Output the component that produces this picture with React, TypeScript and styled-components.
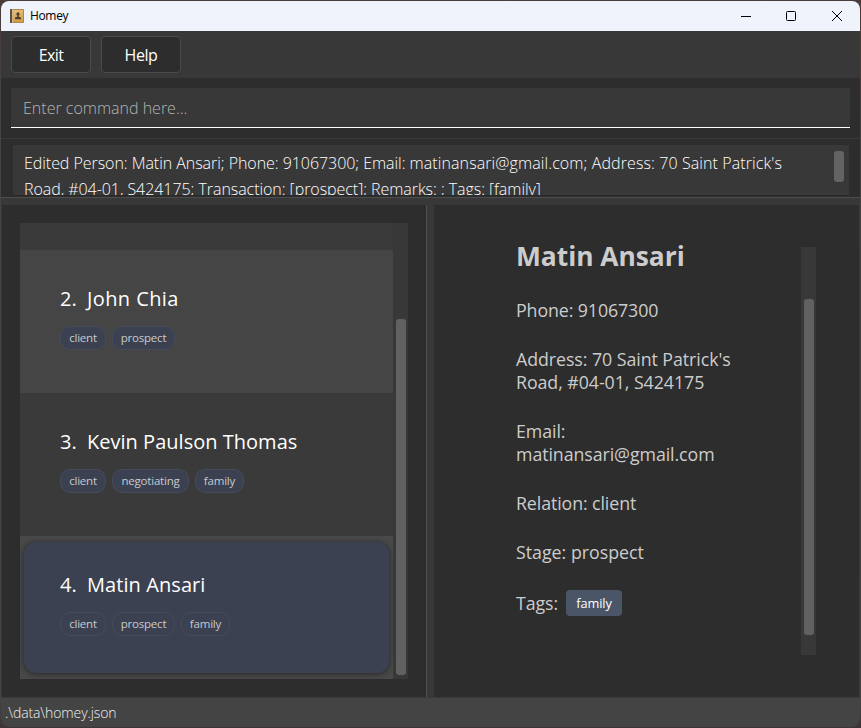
import React from "react";
import styled, { createGlobalStyle } from "styled-components";

const GlobalStyle = createGlobalStyle`
  * { box-sizing: border-box; }
  html, body { margin: 0; background: #3a3838; }
  body {
    font-family: "Open Sans", "Noto Sans", sans-serif;
    overflow: hidden;
  }
`;

const Desktop = styled.div`
  width: 861px;
  height: 728px;
  padding: 1px;
  background: linear-gradient(180deg, #4a3c38 0, #454343 120px, #444444 700px, #3c3436 100%);
`;

const Window = styled.div`
  width: 859px;
  height: 726px;
  display: flex;
  flex-direction: column;
  background: #2d2d2d;
  border-radius: 8px;
  overflow: hidden;
`;

const TitleBar = styled.header`
  flex: 0 0 30px;
  display: flex;
  align-items: center;
  padding-left: 9px;
  background: #eff3fb;
  color: #000;
`;

const AppIcon = styled.svg`
  width: 14px;
  height: 14px;
  margin-right: 6px;
`;

const AppName = styled.span`
  flex: 1;
  font-size: 12px;
  letter-spacing: -0.35px;
  line-height: 28px;
`;

const WindowControls = styled.div`
  display: flex;
  height: 30px;
`;

const WindowControl = styled.button`
  width: 46px;
  height: 29px;
  display: grid;
  place-items: center;
  padding: 0;
  border: 0;
  background: transparent;
`;

const MenuBar = styled.nav`
  flex: 0 0 47px;
  display: flex;
  gap: 10px;
  padding: 5px 10px;
  background: #383838;
`;

const MenuButton = styled.button<{ $tracking: string }>`
  width: 80px;
  height: 37px;
  padding: 0;
  border: 1px solid #4a4a4a;
  border-radius: 4px;
  background: #2d2d2d;
  color: #fff;
  font: 400 16px "Open Sans", sans-serif;
  letter-spacing: ${(p) => p.$tracking};
`;

const CommandArea = styled.div`
  flex: 0 0 60px;
  padding: 10px 10px 10px;
`;

const CommandField = styled.input`
  display: block;
  width: 839px;
  height: 40px;
  padding: 0 12px 0 12px;
  border: 0;
  border-bottom: 1px solid #fff;
  border-radius: 0;
  outline: 0;
  background: #383838;
  color: #fff;
  font: 300 16px "Open Sans", sans-serif;
  &::placeholder { color: #b4b4b4; opacity: 1; }
`;

const ResultArea = styled.section`
  flex: 0 0 59px;
  padding: 6px 11px 0 12px;
  border-top: 1px solid #3a3a3a;
`;

const ResultBox = styled.div`
  height: 51px;
  display: flex;
  justify-content: space-between;
  overflow: hidden;
  padding: 0 4px 0 11px;
  border: solid #2a2a2a;
  border-width: 0 0 1px;
  background: #383838;
`;

const ResultText = styled.p`
  width: 780px;
  height: 50px;
  margin: 0;
  padding-top: 5px;
  overflow: hidden;
  white-space: pre-line;
  color: #fff;
  font-size: 16px;
  font-weight: 300;
  line-height: 26px;
`;

const Narrow = styled.span`
  letter-spacing: -0.05px;
`;

const Wide = styled.span`
  letter-spacing: 0.1px;
`;

const ResultThumb = styled.div`
  width: 10px;
  height: 31px;
  margin: 6px 1px 0 0;
  border-radius: 3px;
  background: #636363;
`;

const Divider = styled.div`
  flex: 0 0 8px;
  border-top: 1px solid #4d4d4d;
  background: #383838;
`;

const SplitPane = styled.main`
  flex: 0 0 492px;
  display: grid;
  grid-template-columns: 424px 8px 1fr;
  border: solid #383838;
  border-width: 0 1px;
`;

const SplitHandle = styled.div`
  border-left: 1px solid #505050;
  background: #383838;
`;

const ListPane = styled.section`
  padding: 18px;
`;

const ListView = styled.div`
  display: flex;
  height: 456px;
  background: #383838;
`;

const Rows = styled.div`
  width: 373px;
`;

const PreviousRow = styled.div`
  height: 27px;
  background: #3a3a3a;
`;

const Row = styled.article<{ $tone: "light" | "dark" | "selected" }>`
  height: 143px;
  padding: 6px 4px;
  background: ${(p) => ({ light: "#454545", dark: "#3a3a3a", selected: "#494949" })[p.$tone]};
`;

const Card = styled.div<{ $selected?: boolean }>`
  width: 365px;
  height: 131px;
  padding: 29px 0 0 36px;
  border-radius: 12px;
  background: ${(p) => (p.$selected ? "#3b4150" : "transparent")};
  box-shadow: ${(p) => (p.$selected ? "0 1px 6px rgba(0, 0, 0, 0.5)" : "none")};
`;

const NameLine = styled.h2<{ $tracking: number }>`
  display: flex;
  margin: 0;
  color: #fff;
  font-size: 20px;
  font-weight: 400;
  line-height: 28px;
  letter-spacing: ${(p) => p.$tracking}px;
`;

const Index = styled.span`
  width: 27px;
  letter-spacing: 0;
`;

const Chips = styled.div`
  display: flex;
  gap: 6px;
  margin-top: 13px;
`;

const Chip = styled.span<{ $width: number }>`
  width: ${(p) => p.$width}px;
  height: 24px;
  border: 1px solid #464b5a;
  border-radius: 10px;
  background: #3b4150;
  color: #c8cace;
  font-size: 11.5px;
  letter-spacing: -0.2px;
  line-height: 21px;
  text-align: center;
`;

const Track = styled.div<{ $height: number }>`
  width: 15px;
  height: ${(p) => p.$height}px;
  background: #383838;
`;

const Thumb = styled.div<{ $top: number; $height: number }>`
  width: 10px;
  height: ${(p) => p.$height}px;
  margin: 0 0 0 3px;
  border-radius: 3px;
  background: #616161;
  transform: translateY(${(p) => p.$top}px);
`;

const DetailPane = styled.section`
  display: flex;
  justify-content: space-between;
  padding: 42px 43px 0 82px;
`;

const Details = styled.div`
  width: 240px;
  color: #cccccc;
`;

const DetailName = styled.h1`
  height: 26px;
  margin: 0 0 26px;
  font-size: 26.4px;
  font-weight: 700;
  line-height: 18px;
  letter-spacing: -0.04px;
`;

const Detail = styled.p<{ $tracking?: number }>`
  margin: 0 0 26px;
  white-space: pre-line;
  font-size: 17.8px;
  line-height: 23px;
  letter-spacing: ${(p) => p.$tracking ?? -0.1}px;
`;

const TagLine = styled.div`
  display: flex;
  align-items: center;
  gap: 7px;
  height: 26px;
  font-size: 17.8px;
  letter-spacing: -0.1px;
`;

const TagLabel = styled.span`
  width: 43px;
`;

const Tag = styled.span`
  width: 56px;
  height: 26px;
  border-radius: 4px;
  background: #4a5568;
  color: #fff;
  font-size: 12.8px;
  line-height: 26px;
  text-align: center;
`;

const StatusBar = styled.footer`
  flex: 1;
  padding-left: 4px;
  border-top: 1px solid #3a3a3a;
  background: #444444;
  color: #f0f0f0;
  font-size: 14px;
  font-weight: 300;
  letter-spacing: -0.1px;
  line-height: 30px;
`;

interface Label { text: string; width: number }
interface Person {
  index: number;
  name: string;
  tracking: number;
  tone: "light" | "dark" | "selected";
  labels: Label[];
}

const client: Label = { text: "client", width: 46 };
const prospect: Label = { text: "prospect", width: 63 };
const family: Label = { text: "family", width: 49 };
const negotiating: Label = { text: "negotiating", width: 77 };

const people: Person[] = [
  { index: 2, name: "John Chia", tracking: 0.4, tone: "light", labels: [client, prospect] },
  { index: 3, name: "Kevin Paulson Thomas", tracking: 0.02, tone: "dark", labels: [client, negotiating, family] },
  { index: 4, name: "Matin Ansari", tracking: 0.08, tone: "selected", labels: [client, prospect, family] },
];

function AddressBookIcon() {
  return (
    <AppIcon viewBox="0 0 14 14">
      <defs>
        <linearGradient id="cover" x1="0" y1="0" x2="0" y2="1">
          <stop offset="0" stopColor="#e5bd78" />
          <stop offset="1" stopColor="#d39c45" />
        </linearGradient>
      </defs>
      <rect width="14" height="14" rx="1" fill="#a9874f" />
      <rect x="0" width="2" height="14" rx=".5" fill="#65503b" />
      <rect x="2" width="1" height="14" fill="#c9b48c" />
      <rect x="3" y="1" width="10" height="12" fill="url(#cover)" />
      <circle cx="8" cy="4.9" r="1.6" fill="#4e4030" />
      <path d="M7.2 6h1.6v1.7l2.2.7v1.8H5V8.4l2.2-.7z" fill="#4e4030" />
    </AppIcon>
  );
}

function PersonRow({ person }: { person: Person }) {
  return (
    <Row $tone={person.tone}>
      <Card $selected={person.tone === "selected"}>
        <NameLine $tracking={person.tracking}>
          <Index>{person.index}.</Index>
          <span>{person.name}</span>
        </NameLine>
        <Chips>
          {person.labels.map((l) => (
            <Chip key={l.text} $width={l.width}>{l.text}</Chip>
          ))}
        </Chips>
      </Card>
    </Row>
  );
}

export default function App() {
  return (
    <Desktop>
      <GlobalStyle />
      <Window>
        <TitleBar>
          <AddressBookIcon />
          <AppName>Homey</AppName>
          <WindowControls>
            <WindowControl aria-label="Minimize">
              <svg width="12" height="12" viewBox="0 0 12 12"><path d="M2 6.5h10" stroke="#000" /></svg>
            </WindowControl>
            <WindowControl aria-label="Maximize">
              <svg width="12" height="12" viewBox="0 0 12 12"><rect x="1.5" y="1.5" width="9" height="9" rx="1" fill="none" stroke="#000" /></svg>
            </WindowControl>
            <WindowControl aria-label="Close">
              <svg width="12" height="12" viewBox="0 0 12 12"><path d="M1 1l10 10M11 1L1 11" stroke="#000" /></svg>
            </WindowControl>
          </WindowControls>
        </TitleBar>
        <MenuBar>
          <MenuButton $tracking="-0.6px">Exit</MenuButton>
          <MenuButton $tracking="-0.4px">Help</MenuButton>
        </MenuBar>
        <CommandArea>
          <CommandField placeholder="Enter command here..." />
        </CommandArea>
        <ResultArea>
          <ResultBox>
            <ResultText>
              <Narrow>Edited Person: Matin Ansari; Phone: 91067300; Email: </Narrow>
              <Wide>{"matinansari@gmail.com; Address: 70 Saint Patrick's\n"}</Wide>
              <Narrow>Road, #04-01, S424175; Transaction: [prospect]; Remarks: ; Tags: [family]</Narrow>
            </ResultText>
            <ResultThumb />
          </ResultBox>
        </ResultArea>
        <Divider />
        <SplitPane>
          <ListPane>
            <ListView>
              <Rows>
                <PreviousRow />
                {people.map((p) => <PersonRow key={p.index} person={p} />)}
              </Rows>
              <Track $height={456}><Thumb $top={96} $height={356} /></Track>
            </ListView>
          </ListPane>
          <SplitHandle />
          <DetailPane>
            <Details>
              <DetailName>Matin Ansari</DetailName>
              <Detail>Phone: 91067300</Detail>
              <Detail $tracking={-0.06}>{"Address: 70 Saint Patrick's\nRoad, #04-01, S424175"}</Detail>
              <Detail $tracking={-0.08}>{"Email:\nmatinansari@gmail.com"}</Detail>
              <Detail>Relation: client</Detail>
              <Detail $tracking={0}>Stage: prospect</Detail>
              <TagLine><TagLabel>Tags:</TagLabel><Tag>family</Tag></TagLine>
            </Details>
            <Track $height={408}><Thumb $top={52} $height={336} /></Track>
          </DetailPane>
        </SplitPane>
        <StatusBar>.\data\homey.json</StatusBar>
      </Window>
    </Desktop>
  );
}
